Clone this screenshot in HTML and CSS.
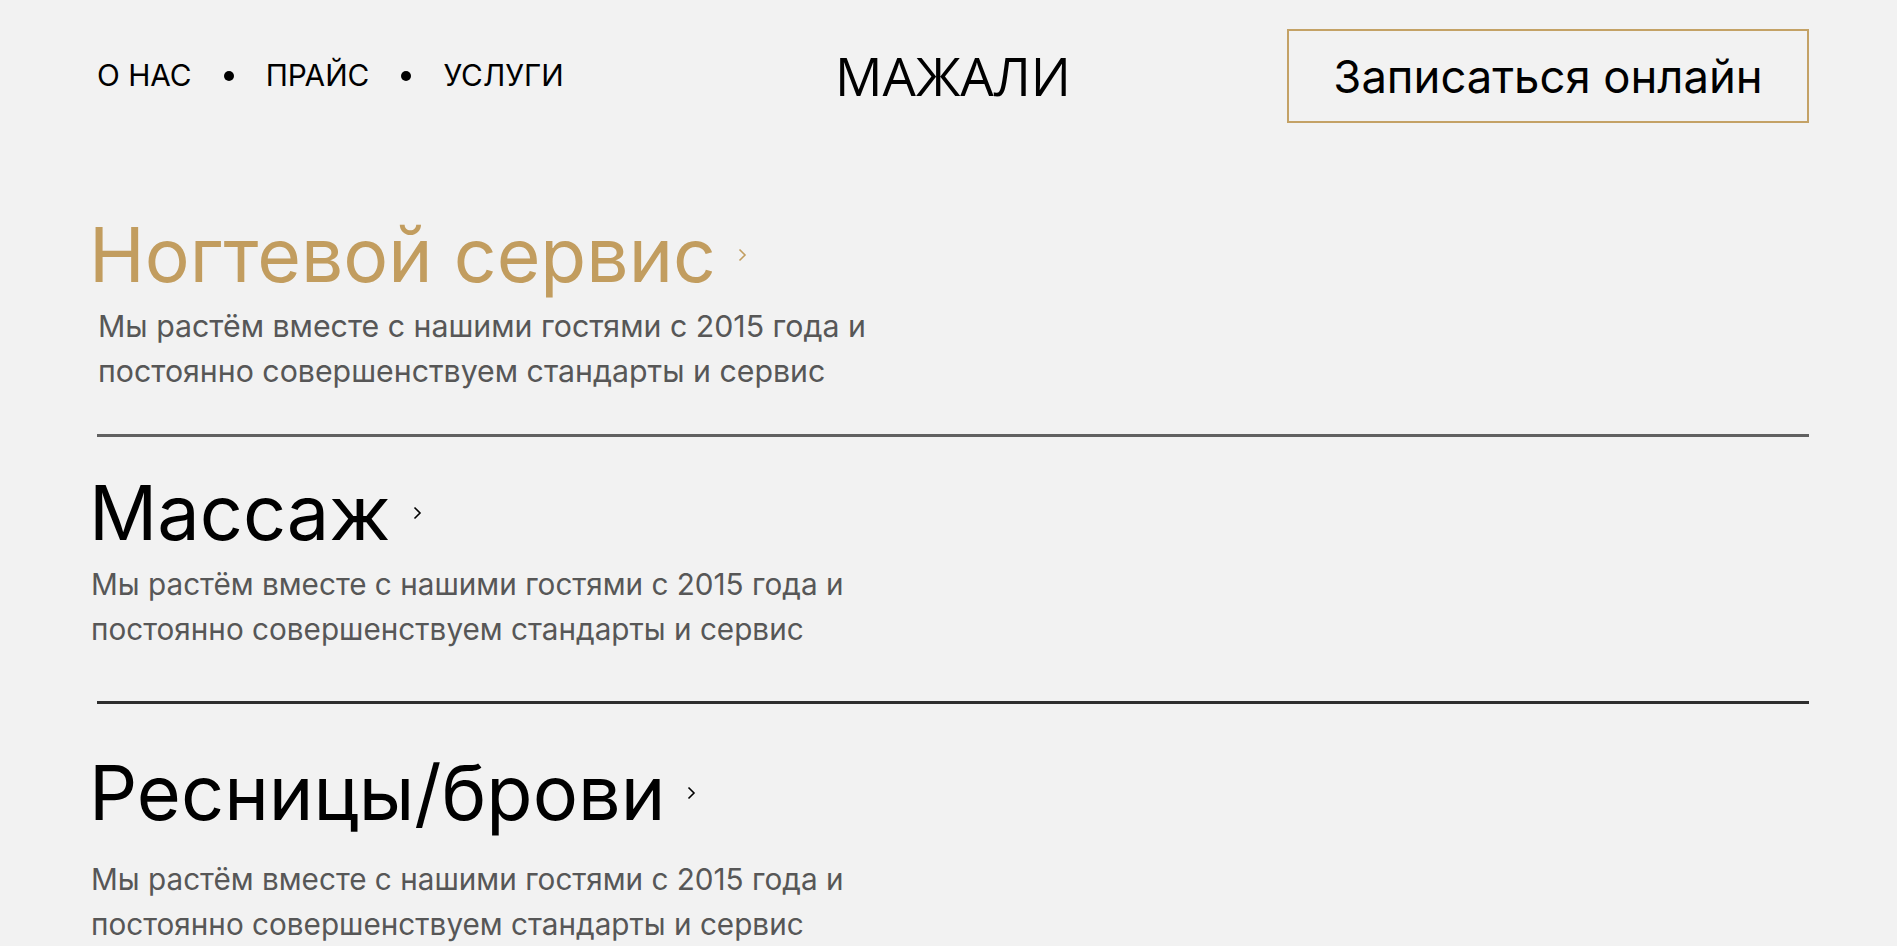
FILE: index.html
```html
<!DOCTYPE html>
<html lang="ru">
<head>
<meta charset="utf-8">
<title>МАЖАЛИ — услуги</title>
<link rel="stylesheet" href="styles.css">
</head>
<body>
<div class="page">
  <header class="header">
    <nav class="nav">
      <a class="nav-link" href="#">О НАС</a>
      <span class="nav-dot"></span>
      <a class="nav-link" href="#">ПРАЙС</a>
      <span class="nav-dot"></span>
      <a class="nav-link" href="#">УСЛУГИ</a>
    </nav>
    <div class="logo">МАЖАЛИ</div>
    <div class="header-action">
      <a class="btn-book" href="#">Записаться онлайн</a>
    </div>
  </header>

  <main class="services">
    <section class="service service--first">
      <h2 class="service-title service-title--active">
        <span>Ногтевой сервис</span>
        <svg class="chevron" viewBox="0 0 9 14" width="9" height="14"><polyline points="1.5,1.5 7,7 1.5,12.5"/></svg>
      </h2>
      <p class="service-desc service-desc--first">Мы растём вместе с нашими гостями с 2015 года и постоянно совершенствуем стандарты и сервис</p>
    </section>
    <hr class="divider divider--light">

    <section class="service service--second">
      <h2 class="service-title">
        <span>Массаж</span>
        <svg class="chevron" viewBox="0 0 9 14" width="9" height="14"><polyline points="1.5,1.5 7,7 1.5,12.5"/></svg>
      </h2>
      <p class="service-desc">Мы растём вместе с нашими гостями с 2015 года и постоянно совершенствуем стандарты и сервис</p>
    </section>
    <hr class="divider divider--dark">

    <section class="service service--third">
      <h2 class="service-title">
        <span>Ресницы/брови</span>
        <svg class="chevron" viewBox="0 0 9 14" width="9" height="14"><polyline points="1.5,1.5 7,7 1.5,12.5"/></svg>
      </h2>
      <p class="service-desc service-desc--spaced">Мы растём вместе с нашими гостями с 2015 года и постоянно совершенствуем стандарты и сервис</p>
    </section>
  </main>
</div>
</body>
</html>
```

FILE: styles.css
```css
* {
  box-sizing: border-box;
}

html, body {
  margin: 0;
  padding: 0;
  background: #f2f2f2;
}

body {
  font-family: Inter, "Noto Sans", "Liberation Sans", sans-serif;
  color: #000;
  overflow: hidden;
}

.page {
  padding: 29px 88px 0 97px;
}

/* Header */
.header {
  display: grid;
  grid-template-columns: 1fr auto 1fr;
  align-items: center;
  height: 94px;
}

.nav {
  display: flex;
  align-items: center;
  gap: 32px;
}

.nav-link {
  font-size: 29.8px;
  color: #000;
  text-decoration: none;
  line-height: 1;
}

.nav-dot {
  width: 10px;
  height: 10px;
  border-radius: 50%;
  background: #000;
}

.logo {
  font-family: "Open Sans", "Noto Sans", sans-serif;
  font-size: 52.8px;
  line-height: 1;
  color: #000;
  margin-top: 0;
}

.header-action {
  display: flex;
  justify-content: flex-end;
}

.btn-book {
  display: flex;
  align-items: center;
  justify-content: center;
  width: 522px;
  height: 94px;
  border: 2px solid #c4a266;
  font-size: 45.4px;
  color: #000;
  text-decoration: none;
}

/* Services */
.services {
  display: flex;
  flex-direction: column;
}

.service--first {
  padding-top: 87px;
  padding-bottom: 40px;
}

.service--second {
  padding-top: 31px;
  padding-bottom: 49px;
}

.service--third {
  padding-top: 44px;
}

.service-title {
  display: flex;
  align-items: center;
  margin: 0 0 0 -8px;
  font-size: 75.6px;
  font-weight: 400;
  line-height: 90px;
  color: #000;
}

.service-title--active {
  font-size: 75px;
  color: #c29d5f;
}

.chevron {
  margin-left: 22px;
  fill: none;
  stroke: currentColor;
  stroke-width: 1.6;
}

.service-desc {
  max-width: 820px;
  margin: 4px 0 0 -6px;
  font-size: 29.7px;
  line-height: 45px;
  color: #575757;
}

.service-desc--first {
  margin-top: 4px;
  margin-left: 1px;
  font-size: 30.3px;
}

.service-desc--spaced {
  margin-top: 19px;
}

.divider {
  margin: 0;
  height: 3px;
  border: 0;
}

.divider--light {
  background: #616161;
}

.divider--dark {
  background: #2e2e2e;
}
```
